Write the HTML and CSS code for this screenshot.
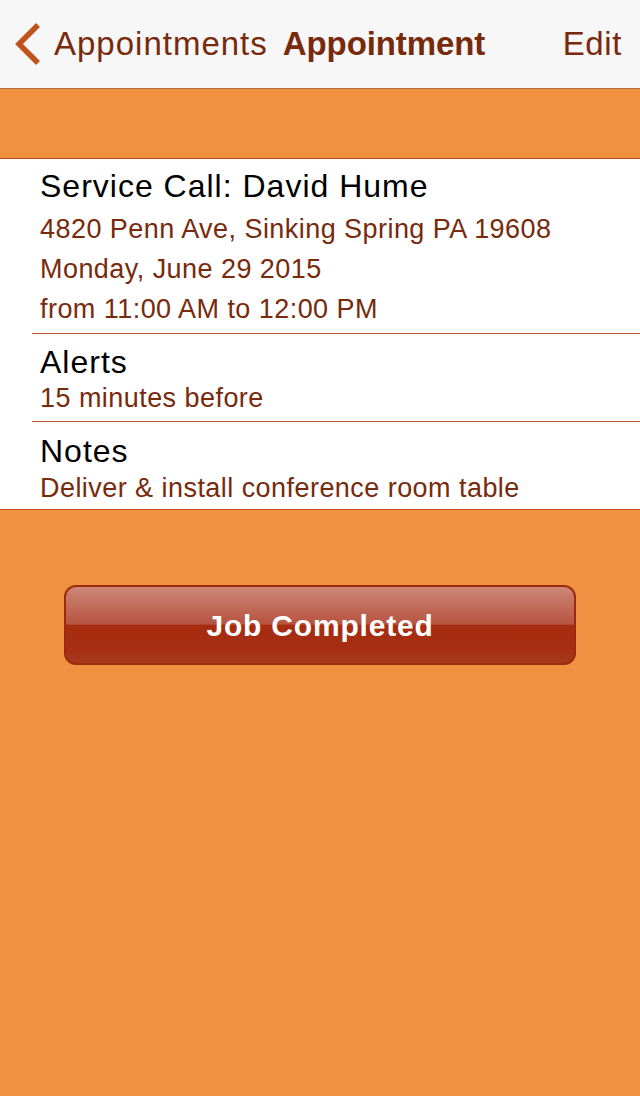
FILE: index.html
```html
<!DOCTYPE html>
<html lang="en">
<head>
  <meta charset="UTF-8">
  <meta name="viewport" content="width=device-width, initial-scale=1.0">
  <title>Appointment</title>
  <link rel="stylesheet" href="styles.css">
</head>
<body>
  <div class="nav-bar">
    <a class="nav-back" href="#">
      <svg class="chevron" viewBox="0 0 30 44">
        <polyline points="25,3 6,22 25,41" fill="none" stroke-width="5.5" stroke-linecap="butt" stroke-linejoin="miter"/>
      </svg>
      <span>Appointments</span>
    </a>
    <div class="nav-title">Appointment</div>
    <a class="nav-edit" href="#">Edit</a>
  </div>

  <div class="header-band"></div>

  <div class="details">
    <div class="row row-main">
      <div class="row-title">Service Call: David Hume</div>
      <div class="row-sub first">4820 Penn Ave, Sinking Spring PA 19608</div>
      <div class="row-sub">Monday, June 29 2015</div>
      <div class="row-sub">from 11:00 AM to 12:00 PM</div>
    </div>
    <div class="row">
      <div class="row-title">Alerts</div>
      <div class="row-sub">15 minutes before</div>
    </div>
    <div class="row last">
      <div class="row-title">Notes</div>
      <div class="row-sub">Deliver &amp; install conference room table</div>
    </div>
  </div>

  <div class="actions">
    <button class="complete-btn">Job Completed</button>
  </div>
</body>
</html>
```

FILE: styles.css
```css
body {
  margin: 0;
  background-color: #ef9140;
  font-family: "Liberation Sans", Arial, sans-serif;
  width: 640px;
  height: 1096px;
  overflow: hidden;
}

/** Nav bar **/

.nav-bar {
  display: flex;
  align-items: center;
  height: 88px;
  background-color: #f7f7f7;
  border-bottom: 1px solid #a8703e;
  color: #772a0c;
  font-size: 33px;
  letter-spacing: 1px;
}

.nav-back {
  display: flex;
  align-items: center;
  color: inherit;
  text-decoration: none;
  padding-left: 13px;
}

.chevron {
  width: 30px;
  height: 44px;
  margin-right: 11px;
  stroke: #c0521c;
}

.nav-title {
  font-weight: bold;
  letter-spacing: -0.1px;
  margin-left: 15px;
}

.nav-edit {
  margin-left: auto;
  margin-right: 18px;
  letter-spacing: 0.6px;
  color: inherit;
  text-decoration: none;
}

/** Header band **/

.header-band {
  height: 69px;
  border-bottom: 1px solid #c04a12;
}

/** Details table **/

.details {
  background-color: #fff;
  border-bottom: 1px solid #c0561e;
}

.row {
  margin-left: 32px;
  padding: 10px 0 6px 8px;
  border-bottom: 1px solid #b65a2a;
}

.row.last {
  border-bottom: none;
  padding-top: 11px;
  padding-bottom: 4px;
}

.row-main {
  padding-top: 7px;
  padding-bottom: 4px;
}

.row-title {
  font-size: 32px;
  line-height: 37px;
  letter-spacing: 1px;
  color: #000;
}

.row-main .row-title {
  line-height: 40px;
}

.row-sub {
  font-size: 27px;
  line-height: 34px;
  letter-spacing: 0.45px;
  color: #772a0c;
}

.row.last .row-sub {
  margin-top: 1px;
}

.row-main .row-sub {
  line-height: 40px;
}

.row-main .row-sub.first {
  margin-top: 3px;
}

/** Button **/

.actions {
  display: flex;
  justify-content: center;
  padding-top: 75px;
}

.complete-btn {
  width: 512px;
  height: 80px;
  border: 2px solid #9e2a0e;
  border-radius: 12px;
  background: linear-gradient(to bottom, #cc8676 0%, #b65440 49%, #a72c10 50%, #a62e12 80%, #a93a1e 100%);
  color: #fff;
  font-family: "Liberation Sans", Arial, sans-serif;
  font-weight: bold;
  font-size: 30px;
  letter-spacing: 0.8px;
  padding: 2px 0 0;
}
```
